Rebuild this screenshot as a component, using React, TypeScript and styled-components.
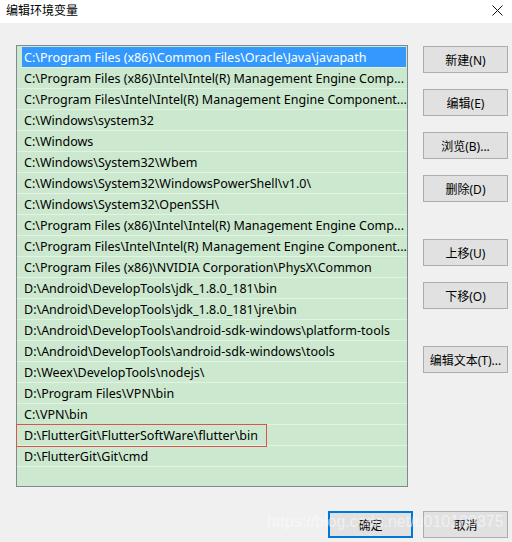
import { FC } from 'react';
import styled, { createGlobalStyle } from 'styled-components';

const paths = [
  'C:\\Program Files (x86)\\Common Files\\Oracle\\Java\\javapath',
  'C:\\Program Files (x86)\\Intel\\Intel(R) Management Engine Comp...',
  'C:\\Program Files\\Intel\\Intel(R) Management Engine Component...',
  'C:\\Windows\\system32',
  'C:\\Windows',
  'C:\\Windows\\System32\\Wbem',
  'C:\\Windows\\System32\\WindowsPowerShell\\v1.0\\',
  'C:\\Windows\\System32\\OpenSSH\\',
  'C:\\Program Files (x86)\\Intel\\Intel(R) Management Engine Comp...',
  'C:\\Program Files\\Intel\\Intel(R) Management Engine Component...',
  'C:\\Program Files (x86)\\NVIDIA Corporation\\PhysX\\Common',
  'D:\\Android\\DevelopTools\\jdk_1.8.0_181\\bin',
  'D:\\Android\\DevelopTools\\jdk_1.8.0_181\\jre\\bin',
  'D:\\Android\\DevelopTools\\android-sdk-windows\\platform-tools',
  'D:\\Android\\DevelopTools\\android-sdk-windows\\tools',
  'D:\\Weex\\DevelopTools\\nodejs\\',
  'D:\\Program Files\\VPN\\bin',
  'C:\\VPN\\bin',
  'D:\\FlutterGit\\FlutterSoftWare\\flutter\\bin',
  'D:\\FlutterGit\\Git\\cmd',
];

// button groups down the right side, groups are spaced apart
const sideButtons = [
  ['新建(N)', '编辑(E)', '浏览(B)...', '删除(D)'],
  ['上移(U)', '下移(O)'],
  ['编辑文本(T)...'],
];

const App: FC = () => {
  return (
    <>
      <GlobalSC />
      <DialogSC>
        <TitleBarSC>
          <span>编辑环境变量</span>
          <CloseSC>
            <svg width="11" height="11" viewBox="0 0 11 11">
              <path d="M0.5 0.5 L10.5 10.5 M10.5 0.5 L0.5 10.5" stroke="#111" strokeWidth="1" />
            </svg>
          </CloseSC>
        </TitleBarSC>
        <BodySC>
          <ListSC>
            {paths.map((p, i) => (
              <RowSC key={i} selected={i === 0}>
                {i === 18 ? <MarkSC>{p}</MarkSC> : p}
              </RowSC>
            ))}
          </ListSC>
          <SideSC>
            {sideButtons.map((group, gi) => (
              <GroupSC key={gi}>
                {group.map(label => (
                  <ButtonSC key={label}>{label}</ButtonSC>
                ))}
              </GroupSC>
            ))}
          </SideSC>
        </BodySC>
        <FooterSC>
          <ButtonSC primary>确定</ButtonSC>
          <ButtonSC>取消</ButtonSC>
        </FooterSC>
        <WatermarkSC>https://blog.csdn.net/u010100375</WatermarkSC>
      </DialogSC>
    </>
  );
};

export default App;

const GlobalSC = createGlobalStyle`
  html, body {
    margin: 0;
    padding: 0;
    background: #f0f0f0;
  }
  * {
    box-sizing: border-box;
  }
`

const DialogSC = styled('div')`
  position: relative;
  width: 512px;
  height: 542px;
  overflow: hidden;
  background: #f0f0f0;
  font-family: "Noto Sans", "Noto Sans CJK SC", sans-serif;
  font-size: 12px;
  color: #000;
`

const TitleBarSC = styled('div')`
  height: 23px;
  background: #fff;
  display: flex;
  align-items: center;
  justify-content: space-between;
  padding: 0 9px 4px 6px;
  font-size: 12px;
`

const CloseSC = styled('div')`
  display: flex;
  align-items: center;
  margin-top: 2px;
`

const BodySC = styled('div')`
  display: flex;
  gap: 15px;
  padding: 22px 4px 0 16px;
`

const ListSC = styled('div')`
  width: 392px;
  height: 442px;
  border: 1px solid #828790;
  background: #cce8cf;
  padding-top: 1px;
  display: flex;
  flex-direction: column;
  font-size: 12.5px;
`

const RowSC = styled('div') <{ selected?: boolean }>`
  height: 21px;
  flex: none;
  display: flex;
  align-items: center;
  padding-left: ${p => p.selected ? '2px' : '7px'};
  margin-left: ${p => p.selected ? '5px' : '0'};
  margin-right: ${p => p.selected ? '1px' : '0'};
  border-bottom: 1px solid #e2f2e4;
  white-space: nowrap;
  background: ${p => p.selected ? '#3399ff' : 'transparent'};
  color: ${p => p.selected ? '#fff' : '#000'};
`

const MarkSC = styled('span')`
  margin-left: -8px;
  padding: 2px 8px 2px 7px;
  border: 1px solid #d9534f;
`

const SideSC = styled('div')`
  display: flex;
  flex-direction: column;
  gap: 37px;
  padding-top: 1px;
`

const GroupSC = styled('div')`
  display: flex;
  flex-direction: column;
  gap: 16px;
`

const ButtonSC = styled('div') <{ primary?: boolean }>`
  width: 85px;
  height: 27px;
  display: flex;
  align-items: center;
  justify-content: center;
  background: #e1e1e1;
  border: ${p => p.primary ? '2px solid #0078d7' : '1px solid #adadad'};
  white-space: nowrap;
`

const FooterSC = styled('div')`
  display: flex;
  justify-content: flex-end;
  gap: 10px;
  padding: 24px 4px 0 0;
`

const WatermarkSC = styled('div')`
  position: absolute;
  left: 267px;
  top: 513px;
  font-family: "Liberation Sans", sans-serif;
  font-size: 16px;
  color: rgba(255, 255, 255, 0.5);
  white-space: nowrap;
  pointer-events: none;
`
